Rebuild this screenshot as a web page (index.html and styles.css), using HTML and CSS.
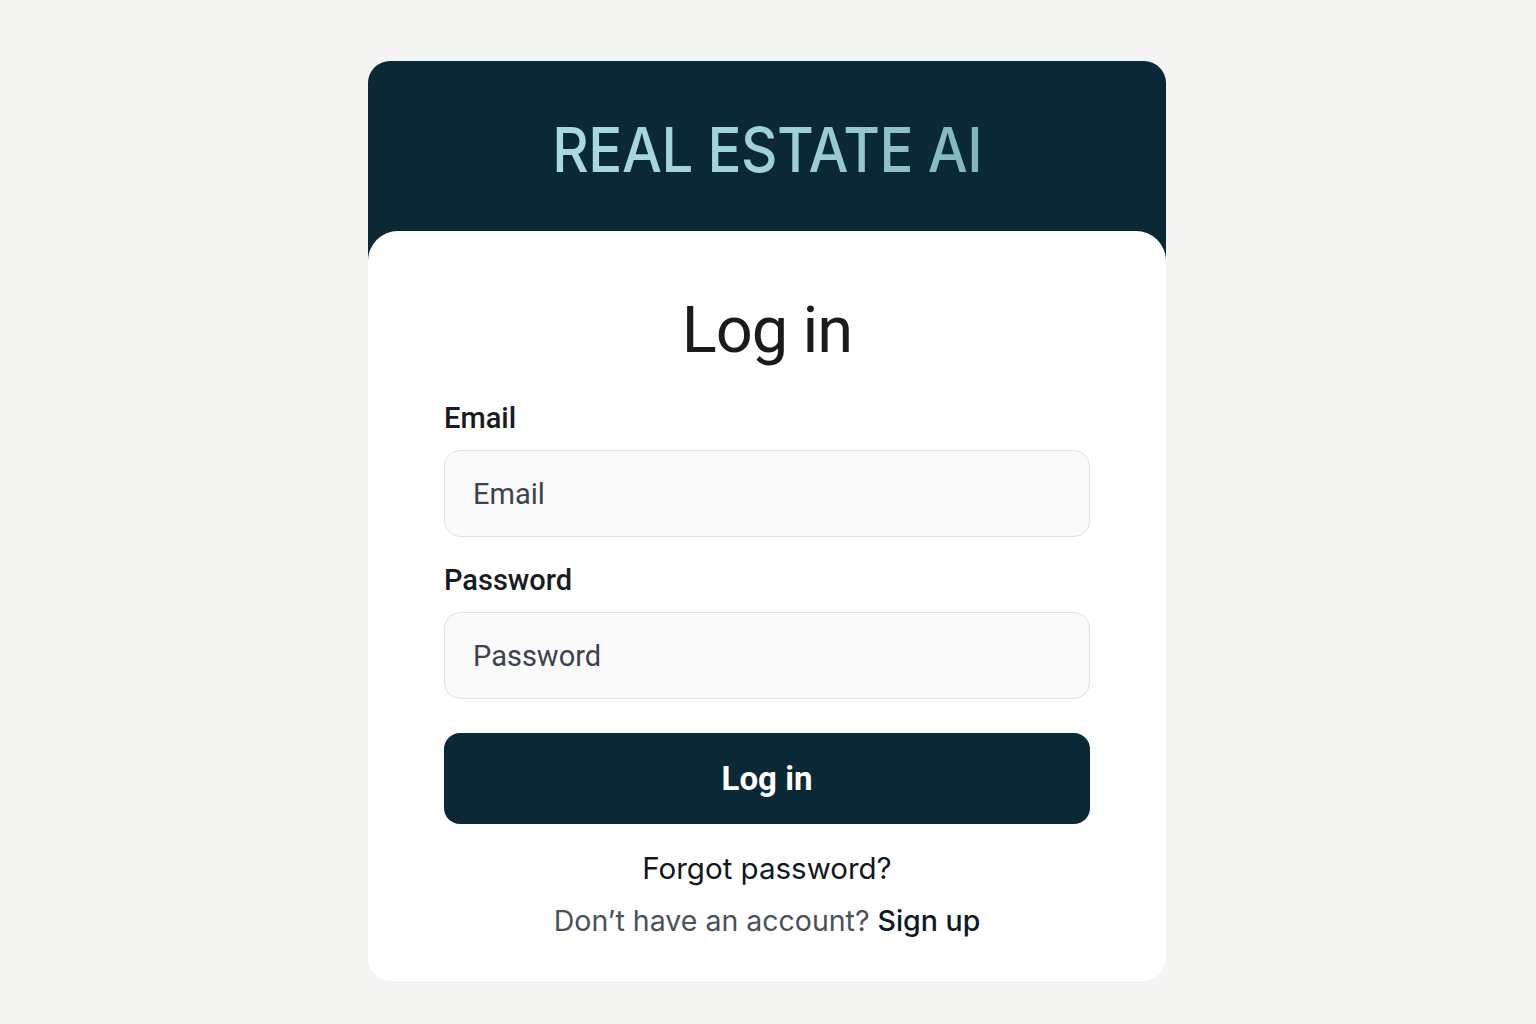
FILE: index.html
```html
<!DOCTYPE html>
<html lang="en">
<head>
<meta charset="utf-8">
<title>Real Estate AI – Log in</title>
<link rel="stylesheet" href="styles.css">
</head>
<body>
<main class="card">
  <header class="card-header">
    <div class="brand">REAL ESTATE AI</div>
  </header>
  <section class="card-body">
    <h1 class="title">Log in</h1>
    <form class="form">
      <label class="field">
        <span class="label">Email</span>
        <input class="input" type="email" placeholder="Email">
      </label>
      <label class="field">
        <span class="label">Password</span>
        <input class="input" type="password" placeholder="Password">
      </label>
      <button class="btn" type="button">Log in</button>
    </form>
    <a class="forgot" href="#">Forgot password?</a>
    <p class="signup">Don’t have an account? <a href="#">Sign up</a></p>
  </section>
</main>
</body>
</html>
```
FILE: styles.css
```css
* { box-sizing: border-box; }
html, body { margin: 0; padding: 0; }
body {
  background: #f4f4f2;
  font-family: Inter, "Noto Sans", "Liberation Sans", sans-serif;
  min-height: 1024px;
  padding-right: 2px;
}
.card {
  width: 798px;
  margin: 61px auto 0;
  background: linear-gradient(#0a2835 0 200px, #ffffff 200px);
  border-radius: 22px 22px 24px 24px;
  display: flex;
  flex-direction: column;
}
.card-header {
  height: 170px;
  display: flex;
  align-items: center;
  justify-content: center;
  padding-top: 8px;
}
.brand {
  font-family: Inter, "Noto Sans", sans-serif;
  font-size: 62px;
  font-weight: 500;
  letter-spacing: -0.5px;
  background: linear-gradient(90deg, #a9dadf 0%, #9ccfd3 60%, #80b6b9 100%);
  -webkit-background-clip: text;
  background-clip: text;
  color: transparent;
  line-height: 1;
  transform: scaleX(0.91);
}
.card-body {
  background: #ffffff;
  border-radius: 30px 30px 24px 24px;
  padding: 59px 76px 42px;
  display: flex;
  flex-direction: column;
  align-items: stretch;
}
.title {
  margin: 0;
  text-align: center;
  font-family: Roboto, "Liberation Sans", sans-serif;
  font-size: 65px;
  font-weight: 400;
  color: #1b1b1b;
  line-height: 80px;
  letter-spacing: -1px;
}
.form {
  margin-top: 31px;
  display: flex;
  flex-direction: column;
}
.field {
  display: flex;
  flex-direction: column;
  margin-bottom: 26px;
}
.label {
  font-family: Roboto, "Liberation Sans", sans-serif;
  font-size: 29px;
  font-weight: 500;
  color: #161c21;
  line-height: 34px;
  margin-bottom: 15px;
}
.input {
  height: 87px;
  border: 1.5px solid #e1e1e1;
  border-radius: 16px;
  background: #fafafa;
  padding: 0 28px;
  font-family: Roboto, "Liberation Sans", sans-serif;
  font-size: 29px;
  color: #2f3843;
  outline: none;
}
.input::placeholder { color: #3a434e; opacity: 1; }
.btn {
  margin-top: 8px;
  height: 91px;
  border: none;
  border-radius: 16px;
  background: #0a2835;
  color: #ffffff;
  font-family: Roboto, "Liberation Sans", sans-serif;
  font-size: 33px;
  font-weight: 700;
}
.forgot {
  margin-top: 26px;
  text-align: center;
  font-size: 29.5px;
  color: #111820;
  text-decoration: none;
  line-height: 36px;
}
.signup {
  margin: 17px 0 0;
  text-align: center;
  font-size: 28.5px;
  color: #4a525c;
  line-height: 36px;
  font-weight: 400;
}
.signup a {
  color: #0b1a24;
  font-weight: 500;
  text-decoration: none;
}
```
